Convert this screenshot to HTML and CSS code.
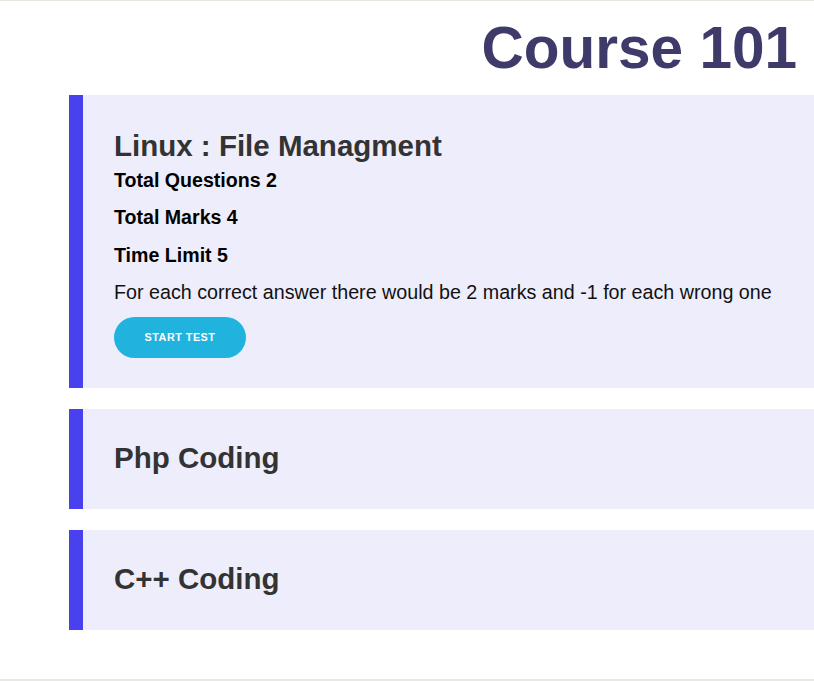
FILE: index.html
```html
<!DOCTYPE html>
<html lang="en">
<head>
<meta charset="utf-8">
<title>Course 101</title>
<link rel="stylesheet" href="styles.css">
</head>
<body>
<div class="page">
  <h1 class="course-title">Course 101</h1>
  <div class="tests">
    <section class="card card-open">
      <h2 class="card-title">Linux : File Managment</h2>
      <h4 class="meta">Total Questions 2</h4>
      <h4 class="meta">Total Marks 4</h4>
      <h4 class="meta">Time Limit 5</h4>
      <p class="rules">For each correct answer there would be 2 marks and -1 for each wrong one</p>
      <button class="start-btn" type="button">START TEST</button>
    </section>
    <section class="card">
      <h2 class="card-title">Php Coding</h2>
    </section>
    <section class="card">
      <h2 class="card-title">C++ Coding</h2>
    </section>
  </div>
</div>
</body>
</html>
```
FILE: styles.css
```css
html, body {
  margin: 0;
  padding: 0;
  background: #ffffff;
}
body {
  font-family: "Liberation Sans", Arial, sans-serif;
}
.page {
  box-sizing: border-box;
  height: 681px;
  border-top: 1px solid #e6e6df;
  border-bottom: 2px solid #e9e9e3;
  overflow: hidden;
}
.course-title {
  margin: 14px 0 14px;
  padding-right: 17px;
  text-align: right;
  font-size: 58.5px;
  line-height: 66px;
  font-weight: 700;
  color: #3e3b6a;
}
.tests {
  display: flex;
  flex-direction: column;
  gap: 21px;
  margin-left: 69px;
}
.card {
  box-sizing: border-box;
  background: #eeedfc;
  border-left: 14px solid #4a41ee;
  padding: 32px 30px 0 31px;
  height: 100px;
}
.card-open {
  height: auto;
  padding-top: 34px;
  padding-bottom: 30px;
}
.card-title {
  margin: 0;
  font-size: 29.5px;
  line-height: 33px;
  font-weight: 700;
  color: #333333;
}
.meta {
  margin: 0 0 14.5px;
  font-size: 19.6px;
  line-height: 23px;
  font-weight: 700;
  color: #000000;
}
.card-title + .meta {
  margin-top: 6.5px;
}
.rules {
  margin: 0 0 12.5px;
  font-size: 19.7px;
  line-height: 23px;
  color: #111111;
}
.start-btn {
  display: block;
  width: 132px;
  height: 41px;
  border: 0;
  border-radius: 21px;
  background: #1fb3de;
  color: #ffffff;
  font-family: "Liberation Sans", Arial, sans-serif;
  font-size: 10.8px;
  font-weight: 700;
  letter-spacing: 0.5px;
  padding: 0;
}
```
